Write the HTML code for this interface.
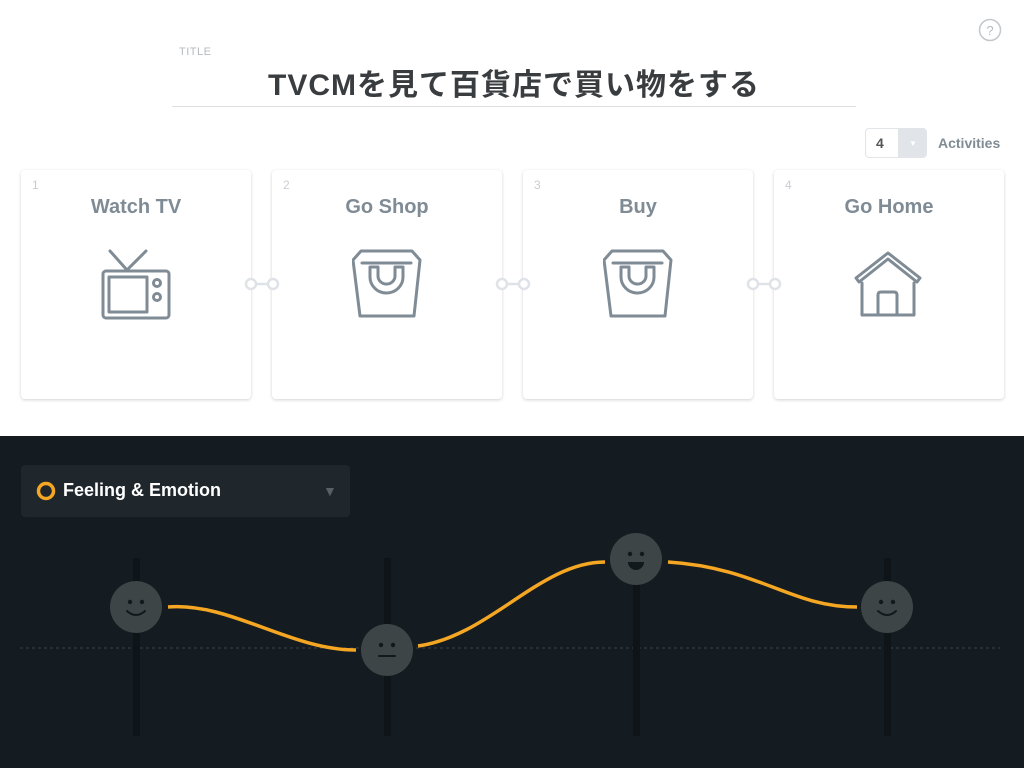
<!DOCTYPE html>
<html><head><meta charset="utf-8"><style>
body{margin:0;width:1024px;height:768px;position:relative;overflow:hidden;background:#fff;font-family:"Liberation Sans","Noto Sans CJK JP",sans-serif}
.card{position:absolute;top:170px;width:230px;height:229px;background:#fff;border-radius:4px;box-shadow:0 1px 3px rgba(0,0,0,.18)}
.card .n{position:absolute;left:11px;top:8px;font-size:12px;color:#c9ced4}
.card .t{position:absolute;top:26px;width:100%;text-align:center;font-size:20px;font-weight:bold;color:#7f8b95}
.card svg{position:absolute;left:80px;top:76px}
.conn{position:absolute;top:277px}
</style></head><body>
<div style="position:absolute;left:179px;top:46px;font-size:11px;color:#b5bbc1;letter-spacing:.5px">TITLE</div>
<div style="position:absolute;left:172px;top:60px;width:684px;text-align:center;font-size:30px;letter-spacing:1px;font-weight:bold;color:#3a3d40">TVCMを見て百貨店で買い物をする</div>
<div style="position:absolute;left:172px;top:106px;width:684px;height:1px;background:#dcdfe2"></div>
<svg style="position:absolute;left:978px;top:18px" width="24" height="24"><circle cx="12" cy="12" r="10.5" fill="none" stroke="#c3c7cb" stroke-width="1.5"/><text x="12" y="17" text-anchor="middle" font-size="13" fill="#b5bac0" font-family="Liberation Sans">?</text></svg>
<div style="position:absolute;left:865px;top:128px;width:62px;height:30px;border:1px solid #e2e5e8;border-radius:4px;box-sizing:border-box;overflow:hidden"><span style="position:absolute;left:10px;top:6px;font-size:14px;font-weight:bold;color:#555">4</span><div style="position:absolute;left:32px;top:0;width:30px;height:30px;background:#e1e5ea;color:#fff;font-size:8px;text-align:center;line-height:30px">▼</div></div>
<div style="position:absolute;left:938px;top:135px;font-size:14px;font-weight:bold;color:#7f8b95">Activities</div>

<div class="card" style="left:21px"><div class="n">1</div><div class="t">Watch TV</div>
<svg width="72" height="76" viewBox="0 0 72 76"><g fill="none" stroke="#7f8b95" stroke-width="3" stroke-linecap="round" stroke-linejoin="round"><path d="M9 5L26 24L45 5"/><rect x="2" y="25" width="66" height="47" rx="3"/><rect x="8" y="31" width="38" height="35"/><circle cx="56" cy="37" r="3.5"/><circle cx="56" cy="51" r="3.5"/></g></svg></div>
<div class="card" style="left:272px"><div class="n">2</div><div class="t">Go Shop</div>
<svg width="72" height="76" viewBox="0 0 72 76"><g fill="none" stroke="#7f8b95" stroke-width="3" stroke-linecap="round" stroke-linejoin="round"><path d="M9 5H60L68 14L62 70H8L1 14Z"/><path d="M10 17H59"/><path d="M18 21H26V30A8.5 8 0 0 0 43 30V21H51V31A16.5 16 0 0 1 18 31Z"/></g></svg></div>
<div class="card" style="left:523px"><div class="n">3</div><div class="t">Buy</div>
<svg width="72" height="76" viewBox="0 0 72 76"><g fill="none" stroke="#7f8b95" stroke-width="3" stroke-linecap="round" stroke-linejoin="round"><path d="M9 5H60L68 14L62 70H8L1 14Z"/><path d="M10 17H59"/><path d="M18 21H26V30A8.5 8 0 0 0 43 30V21H51V31A16.5 16 0 0 1 18 31Z"/></g></svg></div>
<div class="card" style="left:774px"><div class="n">4</div><div class="t">Go Home</div>
<svg width="72" height="76" viewBox="0 0 72 76"><g fill="none" stroke="#7f8b95" stroke-width="3" stroke-linecap="round" stroke-linejoin="round"><path d="M2 32L34 7L66 32L63 36L34 13L5 36Z"/><path d="M8 37V69H60V37"/><path d="M24 69V49Q24 46 27 46H40Q43 46 43 49V69"/></g></svg></div>

<svg class="conn" style="left:244px" width="36" height="14"><g fill="#fff" stroke="#dfe3e8" stroke-width="2.5"><line x1="10" y1="7" x2="26" y2="7"/><circle cx="7" cy="7" r="5"/><circle cx="29" cy="7" r="5"/></g></svg>
<svg class="conn" style="left:495px" width="36" height="14"><g fill="#fff" stroke="#dfe3e8" stroke-width="2.5"><line x1="10" y1="7" x2="26" y2="7"/><circle cx="7" cy="7" r="5"/><circle cx="29" cy="7" r="5"/></g></svg>
<svg class="conn" style="left:746px" width="36" height="14"><g fill="#fff" stroke="#dfe3e8" stroke-width="2.5"><line x1="10" y1="7" x2="26" y2="7"/><circle cx="7" cy="7" r="5"/><circle cx="29" cy="7" r="5"/></g></svg>

<div style="position:absolute;left:0;top:436px;width:1024px;height:332px;background:#141b21"></div>
<div style="position:absolute;left:21px;top:465px;width:329px;height:52px;background:#1f262c;border-radius:4px"></div>
<svg style="position:absolute;left:36px;top:481px" width="22" height="22"><circle cx="10" cy="10" r="7.5" fill="none" stroke="#f5a623" stroke-width="3.5"/></svg>
<div style="position:absolute;left:63px;top:480px;font-size:18px;font-weight:bold;color:#fff">Feeling &amp; Emotion</div>
<div style="position:absolute;left:323px;top:483px;font-size:14px;color:#5a6165">▼</div>

<svg style="position:absolute;left:0;top:436px" width="1024" height="332" viewBox="0 436 1024 332">
<line x1="20" y1="648" x2="1000" y2="648" stroke="#3a4248" stroke-width="1" stroke-dasharray="3,3"/>
<g fill="#0e1418"><rect x="133" y="558" width="7" height="178"/><rect x="384" y="558" width="7" height="178"/><rect x="633" y="558" width="7" height="178"/><rect x="884" y="558" width="7" height="178"/></g>
<g fill="none" stroke="#f5a623" stroke-width="3.5">
<path d="M168 607C230 602 290 650 356 650"/>
<path d="M418 646C490 636 540 562 605 562"/>
<path d="M668 562C760 568 790 607 857 607"/></g>
<g fill="#3d4546"><circle cx="136" cy="607" r="26"/><circle cx="387" cy="650" r="26"/><circle cx="636" cy="559" r="26"/><circle cx="887" cy="607" r="26"/></g>
<g fill="#12181c">
<circle cx="130" cy="602" r="2.2"/><circle cx="142" cy="602" r="2.2"/>
<circle cx="381" cy="645" r="2.2"/><circle cx="393" cy="645" r="2.2"/>
<circle cx="630" cy="554" r="2.2"/><circle cx="642" cy="554" r="2.2"/>
<circle cx="881" cy="602" r="2.2"/><circle cx="893" cy="602" r="2.2"/>
<path d="M628 562H644A8 8 0 0 1 628 562Z"/></g>
<g fill="none" stroke="#12181c" stroke-width="2" stroke-linecap="round">
<path d="M127 611Q136 619 145 611"/><path d="M379 656H395"/><path d="M878 611Q887 619 896 611"/></g>
</svg>
</body></html>
